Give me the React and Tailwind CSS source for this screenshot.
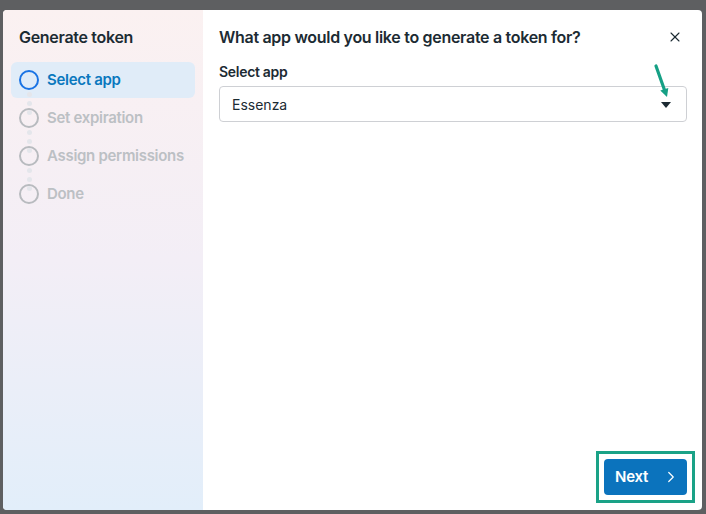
import { X, ChevronRight } from "lucide-react";

const steps = ["Select app", "Set expiration", "Assign permissions", "Done"];

function Stepper() {
  return (
    <div className="flex flex-col px-2">
      {steps.map((s, i) => (
        <div key={s} className="flex flex-col">
          <div className={`flex items-center h-[36px] px-2 gap-[8px] rounded-md ${i === 0 ? "bg-[#e0ecf8]" : ""}`}>
            <div className={`w-[20px] h-[20px] shrink-0 rounded-full border-2 ${i === 0 ? "border-[#1b74e4]" : "border-[#b8bbbf]"}`} />
            <span className={`text-[15px] font-semibold whitespace-nowrap ${i === 0 ? "text-[#0a78be]" : "text-[#bcc0c4]"}`}>{s}</span>
          </div>
          {i < steps.length - 1 && (
            <div className="flex flex-col items-center w-[20px] ml-2 h-[2px] relative">
              <div className="absolute -top-[6px] flex flex-col gap-[4px]">
                <span className="w-[5px] h-[5px] rounded-full bg-[#e4e6eb]" />
                <span className="w-[5px] h-[5px] rounded-full bg-[#e4e6eb]" />
                <span className="w-[5px] h-[5px] rounded-full bg-[#e4e6eb]" />
              </div>
            </div>
          )}
        </div>
      ))}
    </div>
  );
}

export default function App() {
  return (
    <div className="w-[706px] h-[514px] bg-[#5e5f61] pt-[10px] pl-[3px] pr-[4px] pb-[4px] tracking-[-0.3px]" style={{ fontFamily: "Inter, 'Noto Sans', sans-serif" }}>
      <div className="flex h-[500px] w-[699px] rounded-[4px] overflow-hidden bg-white">
        <div className="w-[200px] shrink-0 flex flex-col bg-gradient-to-b from-[#fbf1f1] via-[#f3eef6] to-[#e2eefa]">
          <h2 className="text-[16px] font-semibold text-[#1c2b33] px-4 pt-[16px] pb-[14px] leading-[22px]">Generate token</h2>
          <Stepper />
        </div>
        <div className="flex-1 flex flex-col pl-4 pr-[15px] pt-[16px] pb-[15px] relative">
          <div className="flex items-center justify-between h-[22px]">
            <h1 className="text-[16px] font-semibold text-[#1c2b33] leading-[22px]">What app would you like to generate a token for?</h1>
            <button className="text-[#1c2b33] mr-[4px]"><X size={16} strokeWidth={1.6} /></button>
          </div>
          <label className="mt-[15px] text-[14px] font-semibold text-[#1c2b33] leading-[18px]">Select app</label>
          <div className="mt-[5px] h-[36px] border border-[#ced0d4] rounded-[4px] flex items-center justify-between pl-3 pr-[15px]">
            <span className="text-[14px] text-[#1c2b33] tracking-normal">Essenza</span>
            <span className="shrink-0 mt-[2px] w-0 h-0 border-l-[5px] border-r-[5px] border-t-[6px] border-l-transparent border-r-transparent border-t-[#1c2b33]" />
          </div>
          <svg className="absolute left-[448px] top-[50px]" width="22" height="42" viewBox="0 0 22 42">
            <path d="M5 6 L13.5 30" stroke="#16a085" strokeWidth="3.2" strokeLinecap="round" />
            <path d="M9.3 30.6 L17.3 28 L16 37 Z" fill="#16a085" />
          </svg>
          <div className="flex-1" />
          <div className="flex justify-end">
            <div className="border-[3px] border-[#1aa287] p-[5px] -mr-[8px] -mb-[8px]">
              <button className="h-[36px] w-[83px] rounded-[4px] bg-[#0b73bd] text-white flex items-center justify-center gap-[14px] pl-[4px] text-[15px] font-semibold">
                Next
                <ChevronRight size={18} strokeWidth={1.6} />
              </button>
            </div>
          </div>
        </div>
      </div>
    </div>
  );
}
